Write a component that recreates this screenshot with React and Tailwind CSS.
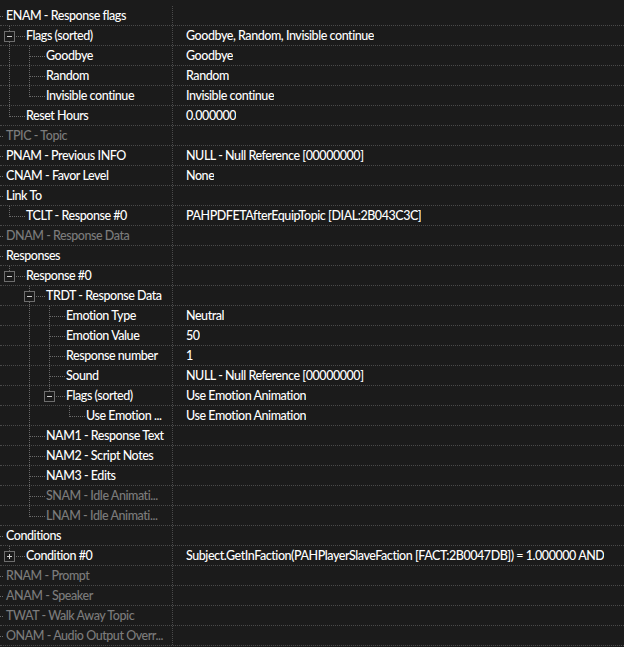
import React from 'react';

// level, label, value, flags: g = greyed out, box = 'minus' | 'plus'
const rows = [
  { level: 0, label: 'ENAM - Response flags' },
  { level: 1, label: 'Flags (sorted)', value: 'Goodbye, Random, Invisible continue', box: 'minus' },
  { level: 2, label: 'Goodbye', value: 'Goodbye' },
  { level: 2, label: 'Random', value: 'Random' },
  { level: 2, label: 'Invisible continue', value: 'Invisible continue' },
  { level: 1, label: 'Reset Hours', value: '0.000000' },
  { level: 0, label: 'TPIC - Topic', g: true },
  { level: 0, label: 'PNAM - Previous INFO', value: 'NULL - Null Reference [00000000]' },
  { level: 0, label: 'CNAM - Favor Level', value: 'None' },
  { level: 0, label: 'Link To' },
  { level: 1, label: 'TCLT - Response #0', value: 'PAHPDFETAfterEquipTopic [DIAL:2B043C3C]' },
  { level: 0, label: 'DNAM - Response Data', g: true },
  { level: 0, label: 'Responses' },
  { level: 1, label: 'Response #0', box: 'minus' },
  { level: 2, label: 'TRDT - Response Data', box: 'minus' },
  { level: 3, label: 'Emotion Type', value: 'Neutral' },
  { level: 3, label: 'Emotion Value', value: '50' },
  { level: 3, label: 'Response number', value: '1' },
  { level: 3, label: 'Sound', value: 'NULL - Null Reference [00000000]' },
  { level: 3, label: 'Flags (sorted)', value: 'Use Emotion Animation', box: 'minus' },
  { level: 4, label: 'Use Emotion ...', value: 'Use Emotion Animation' },
  { level: 2, label: 'NAM1 - Response Text' },
  { level: 2, label: 'NAM2 - Script Notes' },
  { level: 2, label: 'NAM3 - Edits' },
  { level: 2, label: 'SNAM - Idle Animati...', g: true },
  { level: 2, label: 'LNAM - Idle Animati...', g: true },
  { level: 0, label: 'Conditions' },
  {
    level: 1,
    label: 'Condition #0',
    value: 'Subject.GetInFaction(PAHPlayerSlaveFaction [FACT:2B0047DB]) = 1.000000 AND',
    box: 'plus',
  },
  { level: 0, label: 'RNAM - Prompt', g: true },
  { level: 0, label: 'ANAM - Speaker', g: true },
  { level: 0, label: 'TWAT - Walk Away Topic', g: true },
  { level: 0, label: 'ONAM - Audio Output Overr...', g: true },
];

function hasNext(i) {
  const lvl = rows[i].level;
  for (let j = i + 1; j < rows.length; j++) {
    if (rows[j].level < lvl) return false;
    if (rows[j].level === lvl) return true;
  }
  return false;
}

function ancestorContinues(i, k) {
  for (let j = i - 1; j >= 0; j--) {
    if (rows[j].level === k) return hasNext(j);
    if (rows[j].level < k) return false;
  }
  return false;
}

const DOT = '#6a6a6a';

function TreeLines({ i }) {
  const { level, box } = rows[i];
  const w = level * 20 + 6;
  const cy = 10.5;
  const parts = [];

  if (level === 0) {
    parts.push(<line key="t" x1="0" y1={cy} x2="4" y2={cy} />);
  } else {
    for (let k = 1; k < level; k++) {
      if (ancestorContinues(i, k)) {
        const x = 9 + 20 * (k - 1) + 0.5;
        parts.push(<line key={'a' + k} x1={x} y1="0" x2={x} y2="20" />);
      }
    }
    const x = 9 + 20 * (level - 1) + 0.5;
    parts.push(<line key="v" x1={x} y1="0" x2={x} y2={hasNext(i) ? 20 : cy} />);
    parts.push(<line key="h" x1={x} y1={cy} x2={x + 16} y2={cy} />);
  }

  let boxEl = null;
  if (box) {
    const bx = 4 + 20 * (level - 1);
    boxEl = (
      <g key="box">
        <rect x={bx + 0.5} y="5.5" width="10" height="10" fill="#1b1b1b" stroke="#6e6e6e" />
        <line x1={bx + 3} y1={cy} x2={bx + 8} y2={cy} stroke="#d0d0d0" />
        {box === 'plus' && <line x1={bx + 5.5} y1="8" x2={bx + 5.5} y2="13" stroke="#d0d0d0" />}
      </g>
    );
  }

  return (
    <svg width={w} height="19" className="shrink-0" shapeRendering="crispEdges">
      <g stroke={DOT} strokeWidth="1" strokeDasharray="1 1">
        {parts}
      </g>
      {boxEl}
    </svg>
  );
}

export default function App() {
  return (
    <div
      className="w-[624px] h-[647px] overflow-hidden bg-[#1b1b1b] pt-[6px] text-[12.5px] font-medium leading-[19px] tracking-[-0.45px]"
      style={{ fontFamily: 'Lato, "Open Sans", sans-serif' }}
    >
      {rows.map((r, i) => (
        <div key={i} className="flex h-5 border-b border-dotted border-[#4a4a4a]">
          <div className="flex items-center w-[173px] shrink-0 border-r border-dotted border-[#4a4a4a] overflow-hidden whitespace-nowrap">
            <TreeLines i={i} />
            <span className={r.g ? 'text-[#7c7c7c]' : 'text-white'}>{r.label}</span>
          </div>
          <div className="flex items-center pl-[13px] whitespace-nowrap text-white overflow-hidden">
            {r.value}
          </div>
        </div>
      ))}
    </div>
  );
}
